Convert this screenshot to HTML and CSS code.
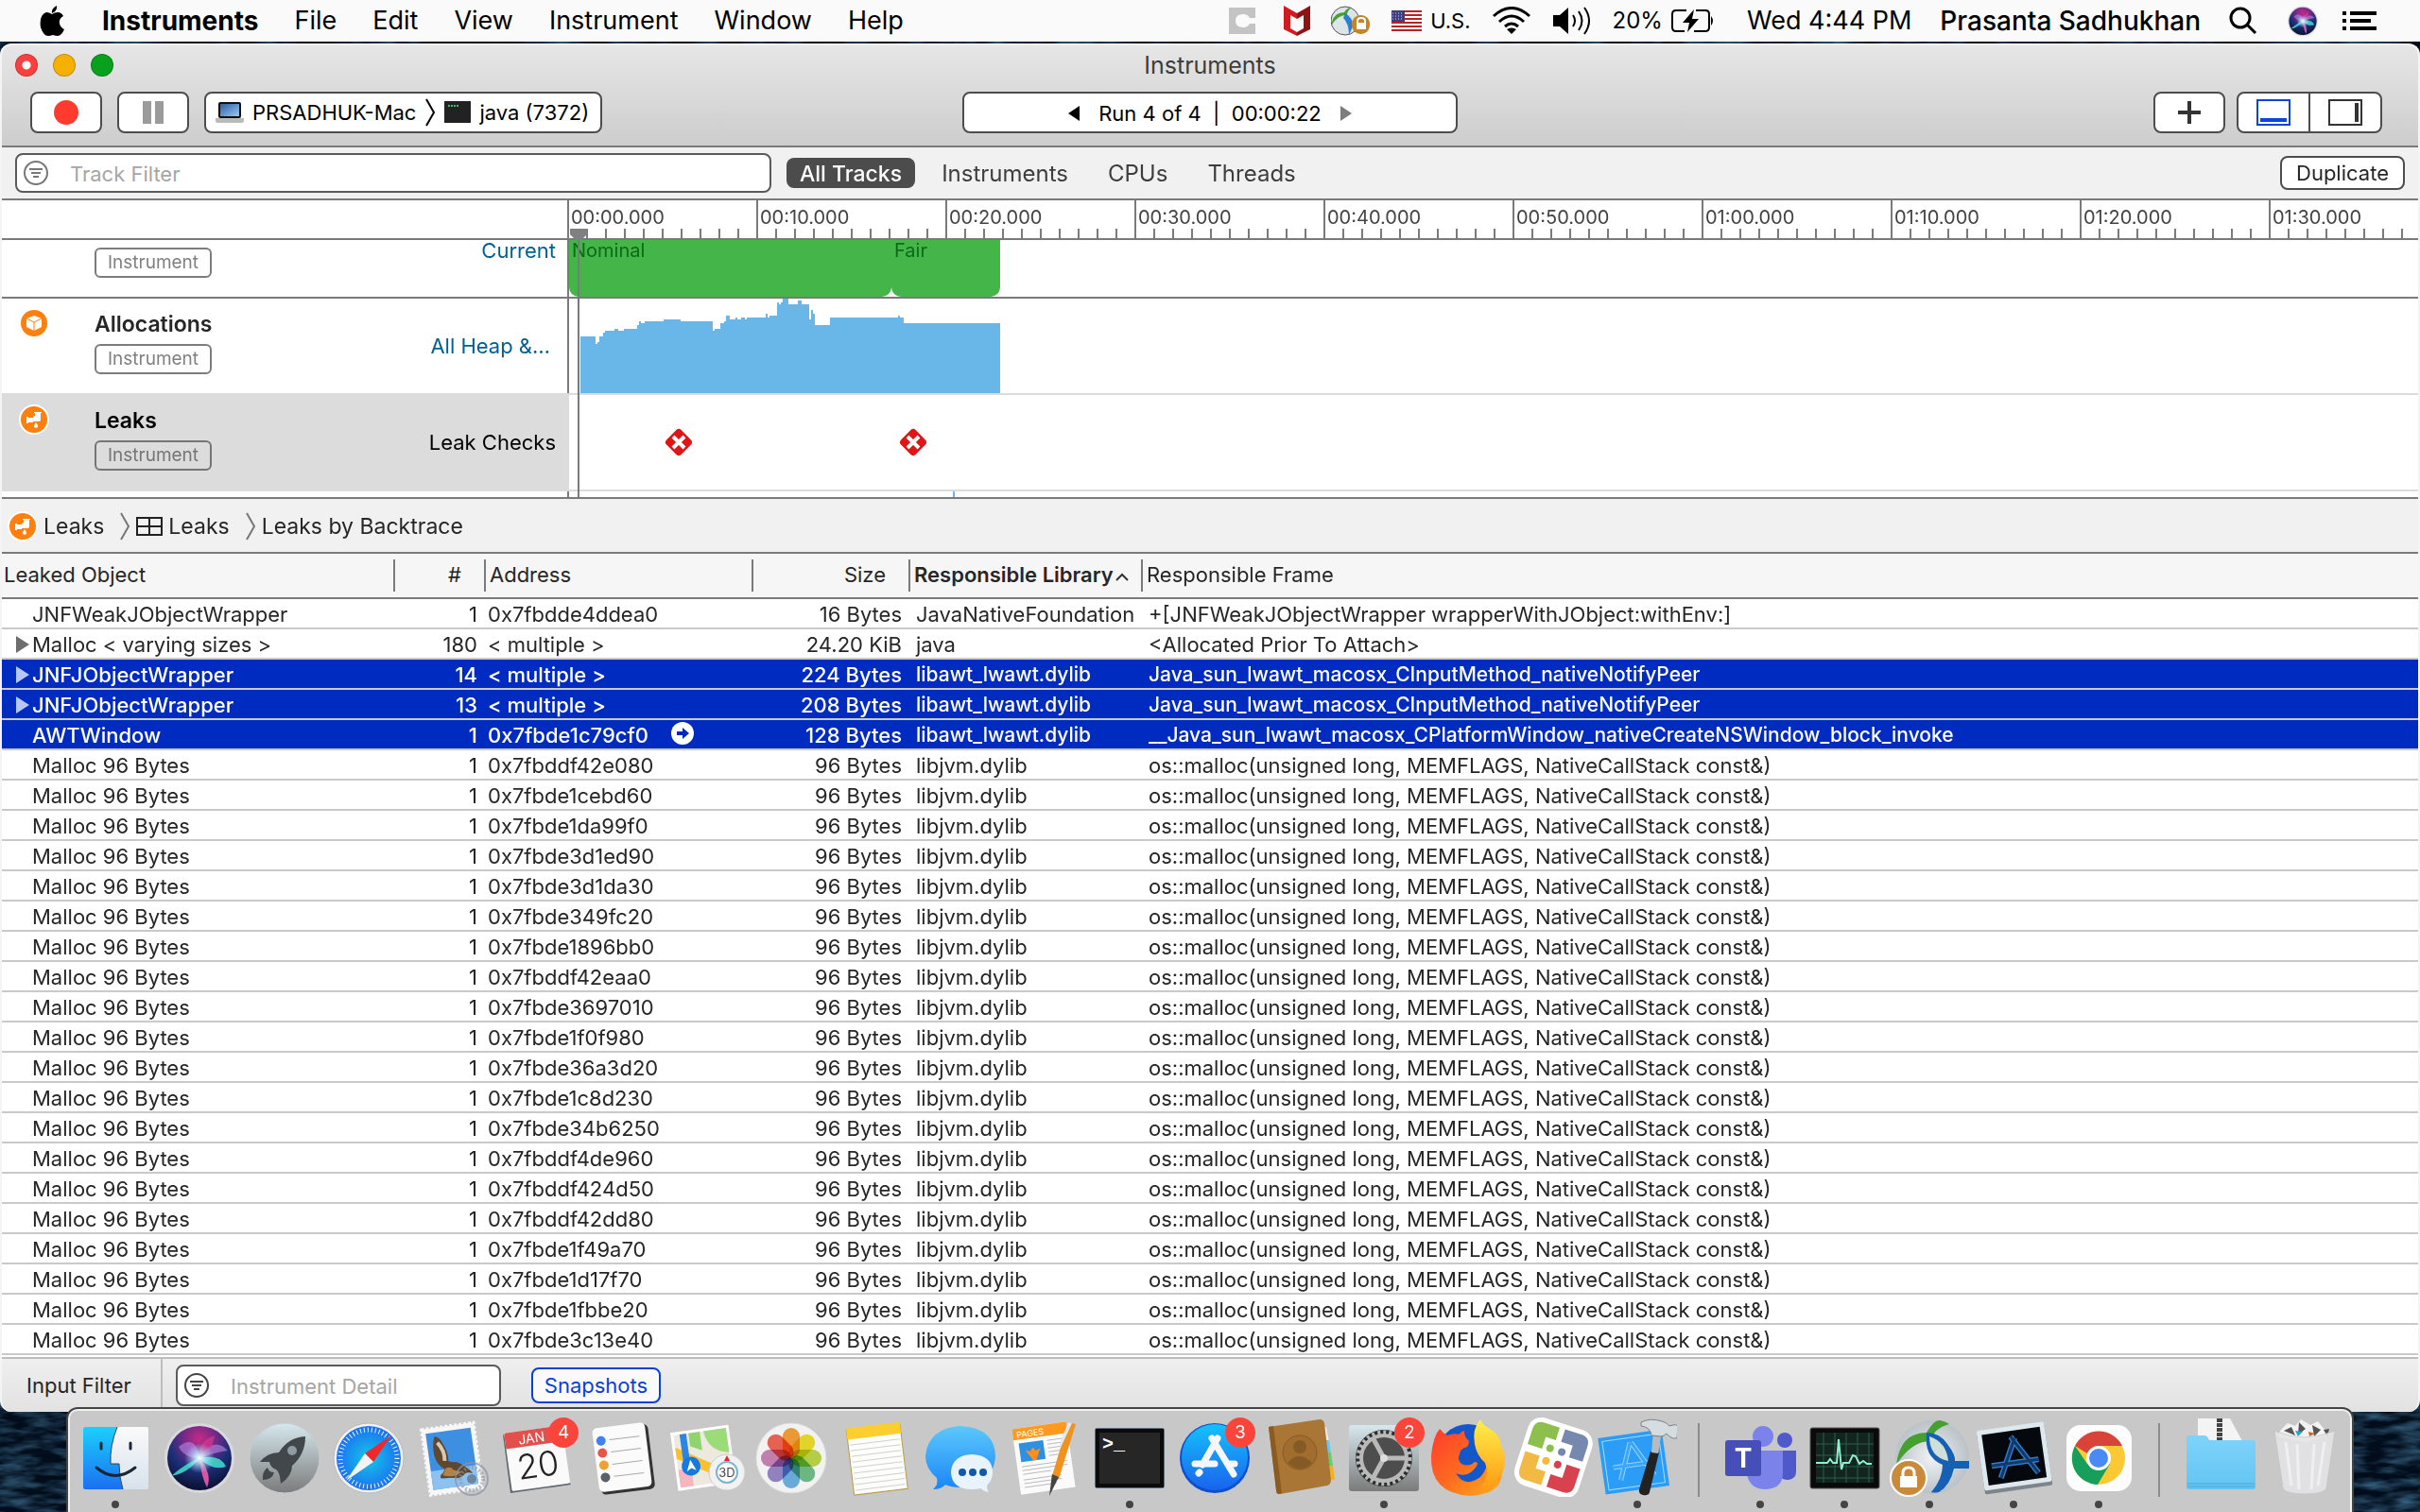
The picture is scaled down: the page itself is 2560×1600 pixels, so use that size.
FILE: index.html
```html
<!DOCTYPE html>
<html lang="en">
  <head>
    <meta charset="UTF-8" />
    <meta name="viewport" content="width=device-width, initial-scale=1.0" />
    <title>Instruments</title>
    <link rel="stylesheet" href="styles.css">
  </head>
  <body>
    <svg class="wallpaper" aria-hidden="true">
      <defs>
        <filter id="water" x="0" y="0" width="100%" height="100%">
          <feTurbulence type="fractalNoise" baseFrequency="0.03 0.12" numOctaves="3" seed="4" />
          <feColorMatrix values="0 0 0 0 0.06  0 0 0 0 0.2  0 0 0 0 0.34  1.4 0 0 0 -0.5" />
        </filter>
        <linearGradient id="g-blue" x1="0" y1="0" x2="0" y2="1"><stop offset="0" stop-color="#1ad0fd" /><stop offset="1" stop-color="#1c6ff2" /></linearGradient>
        <linearGradient id="g-store" x1="0" y1="0" x2="0" y2="1"><stop offset="0" stop-color="#14c2fc" /><stop offset="1" stop-color="#1a63ee" /></linearGradient>
        <linearGradient id="g-chat" x1="0" y1="0" x2="0" y2="1"><stop offset="0" stop-color="#5cc8fb" /><stop offset="1" stop-color="#1a86f8" /></linearGradient>
        <linearGradient id="g-silver" x1="0" y1="0" x2="0" y2="1"><stop offset="0" stop-color="#d6e8ee" /><stop offset="1" stop-color="#7b7b7b" /></linearGradient>
        <linearGradient id="g-light" x1="0" y1="0" x2="0" y2="1"><stop offset="0" stop-color="#fafafa" /><stop offset="1" stop-color="#d8e2ec" /></linearGradient>
        <linearGradient id="g-folder" x1="0" y1="0" x2="0" y2="1"><stop offset="0" stop-color="#7fd3f9" /><stop offset="1" stop-color="#62c4f3" /></linearGradient>
        <linearGradient id="g-laptop" x1="0" y1="0" x2="1" y2="1"><stop offset="0" stop-color="#2a5fa8" /><stop offset="1" stop-color="#9cc8f0" /></linearGradient>
        <linearGradient id="g-fox" x1="0" y1="0" x2="1" y2="1"><stop offset="0" stop-color="#ff3a2f" /><stop offset="0.5" stop-color="#ff6a1f" /><stop offset="1" stop-color="#ffb31a" /></linearGradient>
        <linearGradient id="g-flame" x1="0" y1="0" x2="0" y2="1"><stop offset="0" stop-color="#fff04a" /><stop offset="1" stop-color="#ff9a12" /></linearGradient>
        <radialGradient id="g-safari"><stop offset="0" stop-color="#12c8e8" /><stop offset="1" stop-color="#1d70f0" /></radialGradient>
        <radialGradient id="g-siri" cx="0.5" cy="0.2" r="0.8"><stop offset="0" stop-color="#c42a86" /><stop offset="0.35" stop-color="#6a2a86" /><stop offset="0.6" stop-color="#1c2f78" /><stop offset="1" stop-color="#0a1030" /></radialGradient>
        <radialGradient id="g-glow"><stop offset="0" stop-color="#fff" /><stop offset="0.3" stop-color="#c8f4ff" stop-opacity="0.8" /><stop offset="1" stop-color="#8fd8ff" stop-opacity="0" /></radialGradient>
        <radialGradient id="g-globe"><stop offset="0" stop-color="#f2f4f6" /><stop offset="1" stop-color="#b9c2c8" /></radialGradient>

        <symbol id="siri" viewBox="0 0 84 84">
          <circle cx="42" cy="43" r="37" fill="#d9d9dc" />
          <circle cx="42" cy="43" r="34" fill="url(#g-siri)" />
          <path d="M42 43q-12 16-30 19q16-14 30-19zM42 43q14 14 28 9q-6-14-28-9z" fill="#3fe0cc" opacity="0.85" />
          <path d="M42 43q2 20 8 31q6-14-8-31z" fill="#ee5aa8" opacity="0.9" />
          <path d="M42 43q14-24 30-8q-14 2-30 8zM42 43q-4-26-22-12q6 12 22 12z" fill="#b58be8" opacity="0.6" />
          <path d="M42 43q-2-18 16-24q-2 16-16 24z" fill="#e23a92" opacity="0.6" />
          <circle cx="42" cy="43" r="16" fill="url(#g-glow)" />
        </symbol>
        <symbol id="globe" viewBox="0 0 84 84">
          <circle cx="45" cy="42" r="39" fill="url(#g-globe)" />
          <path d="M7 50q4-34 32-34q8-14 14-13q6 1 10 4q-16 4-20 18q-20 0-36 25z" fill="#46a02f" />
          <path d="M39 16q14 0 22 12q9 12 8 18h15v8h-16q-4 18-16 25q-6 1-8 0q12-14 12-29q-20-8-17-34z" fill="#1560b4" />
          <path d="M42 20q18 6 20 26q-20-4-20-26z" fill="#cfe0d8" />
        </symbol>
        <symbol id="faucet" viewBox="0 0 32 32">
          <circle cx="16" cy="16" r="15" fill="#ff7f0f" stroke="#fff" stroke-width="2" />
          <path d="M8 13h2v1h5v-1l2-1V9h-1V8h8v1h-1v7q0 2-2 2h-6v1h-5v1H8z" fill="#fff" />
          <path d="M18 19q4 5 0 6q-4-1 0-6z" fill="#fff" />
        </symbol>
        <symbol id="filter" viewBox="0 0 28 28">
          <circle cx="14" cy="14" r="12" fill="none" stroke="currentColor" stroke-width="2" />
          <path d="M7 10h14M9 14h10M11 18h6" stroke="currentColor" stroke-width="2" />
        </symbol>
        <symbol id="chevron" viewBox="0 0 12 30">
          <path d="M2 1l8 14l-8 14" fill="none" stroke="currentColor" stroke-width="2" />
        </symbol>
        <symbol id="leak" viewBox="0 0 30 30">
          <rect x="4" y="4" width="22" height="22" rx="4" fill="#e21414" transform="rotate(45 15 15)" />
          <path d="M9 9l12 12M21 9L9 21" stroke="#fff" stroke-width="4" />
        </symbol>
      </defs>
      <rect width="100%" height="100%" filter="url(#water)" />
    </svg>

    <header class="menubar">
      <nav class="menus">
        <a href="#" aria-label="Apple">
          <svg class="apple" viewBox="0 0 26 32"><path d="M18 0q1 5-5 8q-1-5 5-8zM13 9q3-2 6-2q4 0 6 4q-5 3-4 8q1 4 5 6q-3 7-7 7q-2 0-5-1q-3 1-5 1q-5 0-8-9Q-1 10 7 7q3 0 6 2z" /></svg>
        </a>
        <a href="#" class="app-name">Instruments</a>
        <a href="#">File</a>
        <a href="#">Edit</a>
        <a href="#">View</a>
        <a href="#">Instrument</a>
        <a href="#">Window</a>
        <a href="#">Help</a>
      </nav>
      <div class="status">
        <svg class="status-c" width="28" height="28" viewBox="0 0 28 28"><path d="M0 0h28v11h-6q-2-4-7-4q-8 0-8 7t8 7q5 0 7-4h6v11H0z" fill="#c4c4c4" /></svg>
        <svg width="28" height="32" viewBox="0 0 28 32"><path d="M0 0l14 8v6l-7-4v14l7 4v4L0 25z" fill="#d01c20" /><path d="M28 0L14 8v6l7-4v14l-7 4v4l14-7z" fill="#8e1414" /></svg>
        <svg width="42" height="32" viewBox="0 0 42 32">
          <circle cx="15" cy="16" r="15" fill="#dde4e8" stroke="#555" />
          <path d="M1 17q3-10 13-10q3-5 8-5q-5 3-5 8q-9-1-16 10z" fill="#46a02f" />
          <path d="M15 8q8 4 8 14l-4 9q0-12-6-18z" fill="#2b7fd0" />
          <rect x="22" y="10" width="19" height="20" rx="9" fill="#c98325" />
          <path d="M28 19v-3q0-3 4-3t4 3v3" fill="none" stroke="#fff" stroke-width="2" /><rect x="27" y="18" width="10" height="7" fill="#fff" />
        </svg>
        <div class="status-pair">
          <svg width="32" height="22" viewBox="0 0 32 22"><path fill="#fff" d="M0 0h32v22H0z" /><path d="M0 1h32M0 5h32M0 9h32M0 13h32M0 17h32M0 21h32" stroke="#b52228" stroke-width="2" /><path fill="#3b3f7c" d="M0 0h14v12H0z" /><path d="M1 3h12M1 6h12M1 9h12" stroke="#dde" stroke-dasharray="1 2" /></svg>
          <span class="input-source">U.S.</span>
        </div>
        <svg width="42" height="30" viewBox="0 0 42 30"><g fill="none" stroke="#000" stroke-width="3"><path d="M2 10q19-17 38 0" /><path d="M8 16q13-12 26 0" /><path d="M14 21q7-6 14 0" /></g><path d="M21 29l-5-5q5-3 10 0z" /></svg>
        <svg width="42" height="30" viewBox="0 0 42 30"><path d="M1 9h7l9-8v28l-9-8H1z" /><g fill="none" stroke="#000" stroke-width="2"><path d="M22 9q4 6 0 12" /><path d="M28 5q7 10 0 20" /><path d="M34 1q10 14 0 28" /></g></svg>
        <div class="status-pair">
          <span class="charge">20%</span>
          <svg width="46" height="26" viewBox="0 0 46 26"><path d="M16 2H5Q1 2 1 6v14q0 4 4 4h9M26 2h10q4 0 4 4v14q0 4-4 4H24" fill="none" stroke="#000" stroke-width="2" /><path d="M24 1L12 15h7l-2 10l12-14h-7z" /><path d="M42 8q4 5 0 10z" /></svg>
        </div>
      </div>
      <div class="status account">
        <span>Wed 4:44 PM</span>
        <span class="user">Prasanta Sadhukhan</span>
        <svg width="30" height="30" viewBox="0 0 30 30"><circle cx="12" cy="12" r="10" fill="none" stroke="#000" stroke-width="3" /><path d="M19 19l9 9" stroke="#000" stroke-width="3" /></svg>
        <svg class="menubar-siri" width="36" height="36"><use href="#siri" /></svg>
        <svg width="36" height="22" viewBox="0 0 36 22"><path d="M0 3h4M0 11h4M0 19h4M8 3h28M8 11h22M8 19h28" stroke="#000" stroke-width="4" /></svg>
      </div>
    </header>

    <main class="window">
      <header class="chrome">
        <div class="titlebar">
          <div class="lights">
            <button class="light close" aria-label="Close"></button>
            <button class="light minimize" aria-label="Minimize"></button>
            <button class="light maximize" aria-label="Zoom"></button>
          </div>
          <h1>Instruments</h1>
        </div>
        <div class="toolbar">
          <div class="toolbar-left">
            <button class="tool" aria-label="Record"><svg width="26" height="26" viewBox="0 0 26 26"><circle cx="13" cy="13" r="13" fill="#ff3b30" /></svg></button>
            <button class="tool" aria-label="Pause"><svg width="22" height="24" viewBox="0 0 22 24"><path d="M0 0h9v24H0zM13 0h9v24h-9z" fill="#9b9b9b" /></svg></button>
            <button class="tool target">
              <svg width="30" height="22" viewBox="0 0 30 22"><rect x="3" width="24" height="17" rx="2" fill="#111" /><path fill="url(#g-laptop)" d="M5 2h20v13H5z" /><path d="M0 17h30v3q0 2-2 2H2q-2 0-2-2z" fill="#bbb" /></svg>
              <span>PRSADHUK-Mac</span>
              <svg width="12" height="30"><use href="#chevron" /></svg>
              <svg width="28" height="26" viewBox="0 0 28 26"><path fill="#222" d="M0 1h28v23H0z" /><path d="M4 6h11" stroke="#3fbf5a" stroke-width="2" stroke-dasharray="2 1" /></svg>
              <span>java (7372)</span>
            </button>
          </div>
          <div class="run">
            <button aria-label="Previous run"><svg width="12" height="16" viewBox="0 0 12 16"><path d="M12 0v16L0 8z" /></svg></button>
            <span>Run 4 of 4 &nbsp;|&nbsp; 00:00:22</span>
            <button aria-label="Next run"><svg width="12" height="16" viewBox="0 0 12 16"><path d="M0 0v16l12-8z" fill="#7d7d7d" /></svg></button>
          </div>
          <div class="toolbar-right">
            <button class="tool" aria-label="Add instrument"><svg width="24" height="24" viewBox="0 0 24 24"><path d="M12 0v24M0 12h24" stroke="#333" stroke-width="4" /></svg></button>
            <div class="segmented">
              <button aria-label="Toggle detail"><svg width="36" height="28" viewBox="0 0 36 28"><path d="M1 1h34v26H1z" fill="none" stroke="#0a45e0" stroke-width="2" /><path fill="#0a45e0" d="M4 20h28v4H4z" /></svg></button>
              <button aria-label="Toggle inspector"><svg width="36" height="28" viewBox="0 0 36 28"><path d="M1 1h34v26H1z" fill="none" stroke="#333" stroke-width="2" /><path fill="#333" d="M28 4h4v20h-4z" /></svg></button>
            </div>
          </div>
        </div>
      </header>

      <div class="filterbar">
        <label class="search track-search">
          <svg width="28" height="28"><use href="#filter" /></svg>
          <input type="text" placeholder="Track Filter" aria-label="Track Filter" />
        </label>
        <div class="scopes">
          <button class="scope active">All Tracks</button>
          <button class="scope">Instruments</button>
          <button class="scope">CPUs</button>
          <button class="scope">Threads</button>
        </div>
        <button class="duplicate">Duplicate</button>
      </div>

      <section class="timeline">
        <div class="ruler">
          <div class="ruler-scale">
            <span>00:00.000</span><span>00:10.000</span><span>00:20.000</span><span>00:30.000</span><span>00:40.000</span><span>00:50.000</span><span>01:00.000</span><span>01:10.000</span><span>01:20.000</span><span>01:30.000</span>
          </div>
        </div>
        <div class="track thermal">
          <div class="track-info">
            <div class="track-name"><span class="pill">Instrument</span></div>
            <span class="track-label">Current</span>
          </div>
          <div class="lane">
            <div class="state nominal">Nominal</div>
            <div class="state fair">Fair</div>
          </div>
        </div>
        <div class="track">
          <div class="track-info">
            <svg class="track-icon" viewBox="0 0 32 32"><circle cx="16" cy="16" r="14" fill="#ff7f0f" /><path d="M16 8l8 3v9l-8 4l-8-4v-9z" fill="#fff" /><path d="M8 11l8 4l8-4M16 15v9" fill="none" stroke="#ff7f0f" /></svg>
            <div class="track-name"><b>Allocations</b><span class="pill">Instrument</span></div>
            <span class="track-label truncated">All Heap &amp;…</span>
          </div>
          <div class="lane">
            <svg class="heap" viewBox="0 0 458 100">
              <path fill="#69b6e9" d="M14 100V40H30V48H32V46H34V40H38V36H40V34H50V32H54V34H60V32H74V28H76V24H78V26H82V24H102V22H120V24H154V34H156V32H162V26H166V24H168V18H172V22H178V20H180V22H184V20H188V22H190V20H210V16H212V20H214V18H222V4H224V6H226V4H228V0H234V6H244V2H248V6H256V22H258V12H260V16H262V28H278V20H350V18H352V20H356V26H458V100z" />
            </svg>
          </div>
        </div>
        <div class="track selected">
          <div class="track-info">
            <svg class="track-icon"><use href="#faucet" /></svg>
            <div class="track-name"><b>Leaks</b><span class="pill">Instrument</span></div>
            <span class="track-label">Leak Checks</span>
          </div>
          <div class="lane">
            <svg class="leak first" width="30" height="30"><use href="#leak" /></svg>
            <svg class="leak second" width="30" height="30"><use href="#leak" /></svg>
          </div>
        </div>
        <div class="track-peek"></div>
        <div class="playhead"><svg width="18" height="12" viewBox="0 0 18 12"><path d="M0 0h18v6l-6 6H6L0 6z" fill="#808080" /></svg></div>
      </section>

      <nav class="breadcrumb">
        <svg width="32" height="32"><use href="#faucet" /></svg>
        <a href="#">Leaks</a>
        <svg class="crumb-sep" width="12" height="30"><use href="#chevron" /></svg>
        <svg width="28" height="20" viewBox="0 0 28 20"><path d="M1 1h26v18H1zM14 1v18M1 10h26" fill="none" stroke="#222" stroke-width="2" /></svg>
        <a href="#">Leaks</a>
        <svg class="crumb-sep" width="12" height="30"><use href="#chevron" /></svg>
        <a href="#">Leaks by Backtrace</a>
      </nav>

      <div class="detail">
        <table>
          <colgroup><col class="c-object"><col class="c-count"><col class="c-address"><col class="c-size"><col class="c-library"><col></colgroup>
          <thead>
            <tr>
              <th>Leaked Object</th>
              <th>#</th>
              <th>Address</th>
              <th>Size</th>
              <th class="sorted">Responsible Library<svg width="14" height="9" viewBox="0 0 14 9"><path d="M1 8l6-6l6 6" fill="none" stroke="#333" stroke-width="2" /></svg></th>
              <th>Responsible Frame</th>
            </tr>
          </thead>
          <tbody>
            <tr><td>JNFWeakJObjectWrapper</td><td>1</td><td>0x7fbdde4ddea0</td><td>16 Bytes</td><td>JavaNativeFoundation</td><td>+[JNFWeakJObjectWrapper wrapperWithJObject:withEnv:]</td></tr>
            <tr><td><button class="disclosure" aria-label="Expand"></button>Malloc &lt; varying sizes &gt;</td><td>180</td><td>&lt; multiple &gt;</td><td>24.20 KiB</td><td>java</td><td>&lt;Allocated Prior To Attach&gt;</td></tr>
            <tr class="selected"><td><button class="disclosure" aria-label="Expand"></button>JNFJObjectWrapper</td><td>14</td><td>&lt; multiple &gt;</td><td>224 Bytes</td><td>libawt_lwawt.dylib</td><td>Java_sun_lwawt_macosx_CInputMethod_nativeNotifyPeer</td></tr>
            <tr class="selected"><td><button class="disclosure" aria-label="Expand"></button>JNFJObjectWrapper</td><td>13</td><td>&lt; multiple &gt;</td><td>208 Bytes</td><td>libawt_lwawt.dylib</td><td>Java_sun_lwawt_macosx_CInputMethod_nativeNotifyPeer</td></tr>
            <tr class="selected"><td>AWTWindow</td><td>1</td><td>0x7fbde1c79cf0<button class="focus" aria-label="Show history"><svg width="24" height="24" viewBox="0 0 24 24"><circle cx="12" cy="12" r="12" fill="#fff" /><path d="M6 10h6V6l7 6l-7 6v-4H6z" fill="#0026c0" /></svg></button></td><td>128 Bytes</td><td>libawt_lwawt.dylib</td><td>__Java_sun_lwawt_macosx_CPlatformWindow_nativeCreateNSWindow_block_invoke</td></tr>
            <tr><td>Malloc 96 Bytes</td><td>1</td><td>0x7fbddf42e080</td><td>96 Bytes</td><td>libjvm.dylib</td><td>os::malloc(unsigned long, MEMFLAGS, NativeCallStack const&amp;)</td></tr>
            <tr><td>Malloc 96 Bytes</td><td>1</td><td>0x7fbde1cebd60</td><td>96 Bytes</td><td>libjvm.dylib</td><td>os::malloc(unsigned long, MEMFLAGS, NativeCallStack const&amp;)</td></tr>
            <tr><td>Malloc 96 Bytes</td><td>1</td><td>0x7fbde1da99f0</td><td>96 Bytes</td><td>libjvm.dylib</td><td>os::malloc(unsigned long, MEMFLAGS, NativeCallStack const&amp;)</td></tr>
            <tr><td>Malloc 96 Bytes</td><td>1</td><td>0x7fbde3d1ed90</td><td>96 Bytes</td><td>libjvm.dylib</td><td>os::malloc(unsigned long, MEMFLAGS, NativeCallStack const&amp;)</td></tr>
            <tr><td>Malloc 96 Bytes</td><td>1</td><td>0x7fbde3d1da30</td><td>96 Bytes</td><td>libjvm.dylib</td><td>os::malloc(unsigned long, MEMFLAGS, NativeCallStack const&amp;)</td></tr>
            <tr><td>Malloc 96 Bytes</td><td>1</td><td>0x7fbde349fc20</td><td>96 Bytes</td><td>libjvm.dylib</td><td>os::malloc(unsigned long, MEMFLAGS, NativeCallStack const&amp;)</td></tr>
            <tr><td>Malloc 96 Bytes</td><td>1</td><td>0x7fbde1896bb0</td><td>96 Bytes</td><td>libjvm.dylib</td><td>os::malloc(unsigned long, MEMFLAGS, NativeCallStack const&amp;)</td></tr>
            <tr><td>Malloc 96 Bytes</td><td>1</td><td>0x7fbddf42eaa0</td><td>96 Bytes</td><td>libjvm.dylib</td><td>os::malloc(unsigned long, MEMFLAGS, NativeCallStack const&amp;)</td></tr>
            <tr><td>Malloc 96 Bytes</td><td>1</td><td>0x7fbde3697010</td><td>96 Bytes</td><td>libjvm.dylib</td><td>os::malloc(unsigned long, MEMFLAGS, NativeCallStack const&amp;)</td></tr>
            <tr><td>Malloc 96 Bytes</td><td>1</td><td>0x7fbde1f0f980</td><td>96 Bytes</td><td>libjvm.dylib</td><td>os::malloc(unsigned long, MEMFLAGS, NativeCallStack const&amp;)</td></tr>
            <tr><td>Malloc 96 Bytes</td><td>1</td><td>0x7fbde36a3d20</td><td>96 Bytes</td><td>libjvm.dylib</td><td>os::malloc(unsigned long, MEMFLAGS, NativeCallStack const&amp;)</td></tr>
            <tr><td>Malloc 96 Bytes</td><td>1</td><td>0x7fbde1c8d230</td><td>96 Bytes</td><td>libjvm.dylib</td><td>os::malloc(unsigned long, MEMFLAGS, NativeCallStack const&amp;)</td></tr>
            <tr><td>Malloc 96 Bytes</td><td>1</td><td>0x7fbde34b6250</td><td>96 Bytes</td><td>libjvm.dylib</td><td>os::malloc(unsigned long, MEMFLAGS, NativeCallStack const&amp;)</td></tr>
            <tr><td>Malloc 96 Bytes</td><td>1</td><td>0x7fbddf4de960</td><td>96 Bytes</td><td>libjvm.dylib</td><td>os::malloc(unsigned long, MEMFLAGS, NativeCallStack const&amp;)</td></tr>
            <tr><td>Malloc 96 Bytes</td><td>1</td><td>0x7fbddf424d50</td><td>96 Bytes</td><td>libjvm.dylib</td><td>os::malloc(unsigned long, MEMFLAGS, NativeCallStack const&amp;)</td></tr>
            <tr><td>Malloc 96 Bytes</td><td>1</td><td>0x7fbddf42dd80</td><td>96 Bytes</td><td>libjvm.dylib</td><td>os::malloc(unsigned long, MEMFLAGS, NativeCallStack const&amp;)</td></tr>
            <tr><td>Malloc 96 Bytes</td><td>1</td><td>0x7fbde1f49a70</td><td>96 Bytes</td><td>libjvm.dylib</td><td>os::malloc(unsigned long, MEMFLAGS, NativeCallStack const&amp;)</td></tr>
            <tr><td>Malloc 96 Bytes</td><td>1</td><td>0x7fbde1d17f70</td><td>96 Bytes</td><td>libjvm.dylib</td><td>os::malloc(unsigned long, MEMFLAGS, NativeCallStack const&amp;)</td></tr>
            <tr><td>Malloc 96 Bytes</td><td>1</td><td>0x7fbde1fbbe20</td><td>96 Bytes</td><td>libjvm.dylib</td><td>os::malloc(unsigned long, MEMFLAGS, NativeCallStack const&amp;)</td></tr>
            <tr><td>Malloc 96 Bytes</td><td>1</td><td>0x7fbde3c13e40</td><td>96 Bytes</td><td>libjvm.dylib</td><td>os::malloc(unsigned long, MEMFLAGS, NativeCallStack const&amp;)</td></tr>
          </tbody>
        </table>
      </div>

      <footer class="bottombar">
        <span class="input-filter">Input Filter</span>
        <label class="search detail-search">
          <svg width="28" height="28"><use href="#filter" /></svg>
          <input type="text" placeholder="Instrument Detail" aria-label="Instrument Detail" />
        </label>
        <button class="snapshots">Snapshots</button>
      </footer>
    </main>

    <nav class="dock">
      <a href="#" class="app running" aria-label="Finder">
        <svg viewBox="0 0 84 84">
          <rect x="8" y="10" width="69" height="66" rx="2" fill="url(#g-light)" />
          <path d="M44 10q-8 20-7 39h9q0 14 4 27H10q-2 0-2-2V12q0-2 2-2z" fill="url(#g-blue)" />
          <path d="M44 10q-8 20-7 39h9q0 14 4 27" fill="none" stroke="#345" />
          <path d="M27 27v6M58 27v6" stroke="#1b2733" stroke-width="3" stroke-linecap="round" />
          <path d="M22 53q20 17 41 0" fill="none" stroke="#1b2733" stroke-width="3" stroke-linecap="round" />
        </svg>
      </a>
      <a href="#" class="app" aria-label="Siri"><svg><use href="#siri" /></svg></a>
      <a href="#" class="app" aria-label="Launchpad">
        <svg viewBox="0 0 84 84">
          <circle cx="42" cy="43" r="37" fill="url(#g-silver)" stroke="#c5cdd0" />
          <path d="M64 20q-18 1-28 17q-12 0-20 10l10 0q1 6 7 8q4 2 5 15q12-8 12-19q14-12 14-31z" fill="#41474b" />
          <circle cx="50" cy="35" r="5" fill="#8f9ba0" />
          <path d="M24 53q-6 4-5 13q10 0 12-8q-6 0-7-5z" fill="#41474b" />
        </svg>
      </a>
      <a href="#" class="app" aria-label="Safari">
        <svg viewBox="0 0 84 84">
          <circle cx="42" cy="43" r="37" fill="#f1f1f1" stroke="#bbb" />
          <circle cx="42" cy="43" r="34" fill="url(#g-safari)" />
          <circle cx="42" cy="43" r="30" fill="none" stroke="#e8f6ff" stroke-width="5" stroke-dasharray="1 3" />
          <path d="M66 19L38 38l9 9z" fill="#f0282c" />
          <path d="M18 67l20-29l9 9z" fill="#f3f3f3" />
        </svg>
      </a>
      <a href="#" class="app" aria-label="Mail">
        <svg viewBox="0 0 84 84">
          <g transform="rotate(-8 38 43)">
            <rect x="12" y="9" width="56" height="70" fill="#f7f7f7" stroke="#f7f7f7" stroke-width="3" stroke-dasharray="3 2" />
            <rect x="16" y="14" width="48" height="60" fill="#3d8fe2" />
            <path d="M16 54h48v20H16z" fill="#8dc1f0" />
            <path d="M25 18q6 2 8 10q4 8 3 18q4 2 8 2q8 4 16 14q-6-2-8-1q-6 6-14 3l-12-1q-2-3 2-5l3-4q-8-6-9-16q-1-12 3-20z" fill="#5f4730" />
            <path d="M27 25q7 10 5 20" stroke="#d9c9ae" stroke-width="4" fill="none" />
            <path d="M28 60l4-7q6-2 8 3l8 3q-8 6-20 1z" fill="#b0834a" />
          </g>
          <circle cx="61" cy="65" r="17" fill="none" stroke="#8a93a3" stroke-width="2" opacity="0.7" />
          <circle cx="61" cy="65" r="12" fill="none" stroke="#8a93a3" stroke-width="4" stroke-dasharray="2 2" opacity="0.6" />
          <circle cx="61" cy="65" r="5" fill="#64758c" opacity="0.8" />
        </svg>
      </a>
      <a href="#" class="app" aria-label="Calendar">
        <svg viewBox="0 0 84 84">
          <path d="M5 18l8 62l64-9l-6-8z" fill="#5f686d" />
          <g transform="rotate(-8 42 42)">
            <rect x="10" y="12" width="62" height="62" rx="2" fill="#fafafa" />
            <path d="M10 14q0-2 2-2h58q2 0 2 2v15H10z" fill="#e2504b" />
            <text x="38" y="26" class="cal-month">JAN</text>
            <text x="41" y="63" class="cal-day">20</text>
          </g>
        </svg>
        <span class="badge">4</span>
      </a>
      <a href="#" class="app" aria-label="Reminders">
        <svg viewBox="0 0 84 84">
          <g transform="rotate(-7 42 42)">
            <rect x="15" y="10" width="57" height="69" rx="5" fill="#333" />
            <rect x="13" y="8" width="56" height="68" rx="5" fill="#fbfbfb" />
            <circle cx="21" cy="22" r="5" fill="#3d82f6" /><circle cx="21" cy="35" r="5" fill="#ea5545" /><circle cx="21" cy="48" r="5" fill="#f1a033" /><circle cx="21" cy="61" r="5" fill="#5b6168" />
            <path d="M30 22h32M30 35h32M30 48h32M30 61h32" stroke="#aaa" />
          </g>
        </svg>
      </a>
      <a href="#" class="app" aria-label="Maps">
        <svg viewBox="0 0 84 84">
          <g transform="rotate(-8 36 43)">
            <rect x="7" y="12" width="62" height="62" fill="#fff" />
            <rect x="10" y="15" width="56" height="56" fill="#eee9df" />
            <path d="M42 15h24v26q-22-4-24-26z" fill="#9bdc78" />
            <path d="M10 52h14v19H10z" fill="#f4b6bf" /><path d="M26 15h12v20l-12-6z" fill="#8fd46d" />
            <path d="M10 28l56 34v12l-56-34z" fill="#fbc02d" />
            <path d="M20 15v30" stroke="#2a86e0" stroke-width="7" />
            <circle cx="24" cy="50" r="10" fill="#1579e0" /><path d="M24 43l5 12l-5-3l-5 3z" fill="#fff" />
          </g>
          <circle cx="63" cy="58" r="19" fill="#f2f2f2" stroke="#ccc" />
          <circle cx="63" cy="58" r="11" fill="#fff" stroke="#7db4d0" stroke-width="2" />
          <path d="M63 40l3 6h-6z" fill="#e22" />
          <text x="63" y="63" class="map-text">3D</text>
        </svg>
      </a>
      <a href="#" class="app" aria-label="Photos">
        <svg viewBox="0 0 84 84">
          <circle cx="42" cy="43" r="37" fill="#f2f2f2" stroke="#ddd" />
          <g class="petals">
            <rect x="33" y="11" width="18" height="32" rx="9" fill="#f8a13a" />
            <rect x="33" y="11" width="18" height="32" rx="9" fill="#efdf2c" transform="rotate(45 42 43)" />
            <rect x="33" y="11" width="18" height="32" rx="9" fill="#bdd94a" transform="rotate(90 42 43)" />
            <rect x="33" y="11" width="18" height="32" rx="9" fill="#72c08a" transform="rotate(135 42 43)" />
            <rect x="33" y="11" width="18" height="32" rx="9" fill="#6fb3e4" transform="rotate(180 42 43)" />
            <rect x="33" y="11" width="18" height="32" rx="9" fill="#9a88ca" transform="rotate(225 42 43)" />
            <rect x="33" y="11" width="18" height="32" rx="9" fill="#cc86b6" transform="rotate(270 42 43)" />
            <rect x="33" y="11" width="18" height="32" rx="9" fill="#f26655" transform="rotate(315 42 43)" />
          </g>
        </svg>
      </a>
      <a href="#" class="app" aria-label="Notes">
        <svg viewBox="0 0 84 84">
          <g transform="rotate(-7 42 42)">
            <rect x="14" y="9" width="57" height="70" fill="#fdfdfa" stroke="#b99b45" />
            <path d="M14 8h57v12H14z" fill="#fccf2e" />
            <path d="M16 26h53M16 32h53M16 38h53M16 44h53M16 50h53M16 56h53M16 62h53M16 68h53M16 74h53" stroke="#d0d0d0" />
          </g>
        </svg>
      </a>
      <a href="#" class="app" aria-label="Messages">
        <svg viewBox="0 0 84 84">
          <path d="M42 9q37 2 37 33q-3 30-37 32q-10 0-16-3q-4 5-13 5q6-5 4-12Q5 54 5 41Q8 11 42 9z" fill="url(#g-chat)" />
          <path d="M54 39q22 1 22 19q0 8-6 14q0 5 2 7q-6-1-8-4q-31 5-32-17q1-18 22-19z" fill="#e9f3fb" />
          <circle cx="44" cy="58" r="4" fill="#1456a8" /><circle cx="55" cy="58" r="4" fill="#1456a8" /><circle cx="66" cy="58" r="4" fill="#1456a8" />
        </svg>
      </a>
      <a href="#" class="app" aria-label="Pages">
        <svg viewBox="0 0 84 84">
          <g transform="rotate(-8 40 43)">
            <rect x="11" y="8" width="58" height="70" fill="#fbfbfb" />
            <path d="M11 8h58v12H11z" fill="#ff9a1e" />
            <text x="15" y="18" class="pages-text">PAGES</text>
            <rect x="16" y="24" width="26" height="20" fill="#2f8fe0" /><path d="M29 44l-7-12l5 2l3-4l3 4l5-2l-6 12z" fill="#ff8f1a" />
            <path d="M46 25h18M46 29h18M46 33h18M46 37h18M46 41h18M16 49h48M16 53h48M16 57h30M16 63h40M16 67h40M16 71h34" stroke="#bbb" />
          </g>
          <path d="M66 5l8 2l-18 58l-8 0z" fill="#f0921e" /><path d="M66 5l4 1l-12 26l-1-4z" fill="#dfe8ee" /><path d="M49 60l7 3l-10 20z" fill="#444" />
        </svg>
      </a>
      <a href="#" class="app running" aria-label="Terminal">
        <svg viewBox="0 0 84 84">
          <rect x="5" y="11" width="74" height="64" rx="2" fill="#0b0b0b" stroke="#bcd" /><rect x="10" y="16" width="64" height="54" fill="#262626" />
          <text x="13" y="34" class="prompt">&gt;_</text>
        </svg>
      </a>
      <a href="#" class="app" aria-label="App Store">
        <svg viewBox="0 0 84 84">
          <circle cx="42" cy="43" r="37" fill="#0c4fd0" /><circle cx="42" cy="42" r="35" fill="url(#g-store)" />
          <g stroke="#f4f6fa" stroke-width="7" stroke-linecap="round"><path d="M45 22L29 50M39 22l23 38M21 49h21M56 49h7M25 59l1-1" /></g>
        </svg>
        <span class="badge">3</span>
      </a>
      <a href="#" class="app" aria-label="Contacts">
        <svg viewBox="0 0 84 84">
          <path d="M62 10h9l3 17h-10z" fill="#eee" /><path d="M64 24h10l2 14H65z" fill="#68c7ea" /><path d="M65 37h11l2 15H66z" fill="#63cf6c" /><path d="M66 51h12l2 15H66z" fill="#f4b120" />
          <path d="M10 10l54-8q4 0 5 4l7 60q0 5-4 6l-50 9q-4 0-4-4z" fill="#a97635" /><path d="M10 10l5-1l9 71l-3 1q-3 0-3-4z" fill="#8a5c22" />
          <circle cx="43" cy="37" r="18" fill="#a06d2e" stroke="#855a24" /><circle cx="43" cy="31" r="7" fill="#855a24" /><path d="M30 48q12-14 26 0q-12 12-26 0z" fill="#855a24" />
        </svg>
      </a>
      <a href="#" class="app running" aria-label="System Preferences">
        <svg viewBox="0 0 84 84">
          <rect x="5" y="8" width="74" height="70" rx="3" fill="url(#g-silver)" />
          <circle cx="42" cy="43" r="30" fill="#2d2d2d" /><circle cx="42" cy="43" r="24" fill="#4d4d4d" stroke="#b9b9b9" stroke-width="4" /><circle cx="42" cy="43" r="27" fill="none" stroke="#b9b9b9" stroke-width="5" stroke-dasharray="3 3" />
          <path d="M42 43h23M42 43L31 23M42 43L31 63" stroke="#b9b9b9" stroke-width="5" /><circle cx="42" cy="43" r="4" fill="#ddd" />
        </svg>
        <span class="badge">2</span>
      </a>
      <a href="#" class="app" aria-label="Firefox">
        <svg viewBox="0 0 84 84">
          <circle cx="42" cy="40" r="33" fill="#1457c8" />
          <path d="M12 12q4 5 8 7q8-3 12-1q4-4 6-4q0 6 3 9q4 2 0 8q-8 2-8 8q-3 5 2 10q8 4 14-2q6 0 0 7q-8 10-20 5q10 16 26 4q14-16 4-40q14 8 18 28q6 30-33 32Q1 80 3 40q2-20 9-28z" fill="url(#g-fox)" />
          <path d="M55 2q-9 10-6 26q2 12 11 20q6 16-8 28q30-4 29-34q-2-10-4-12q-1-12-12-18q-8-4-10-10z" fill="url(#g-flame)" />
        </svg>
      </a>
      <a href="#" class="app" aria-label="Slack">
        <svg viewBox="0 0 84 84">
          <g transform="rotate(18 42 42)">
            <rect x="7" y="5" width="71" height="75" rx="15" fill="#fff" />
            <path d="M12 37V20q0-10 10-10h17v14H28v13z" fill="#8cbf4c" /><path d="M45 10h18q10 0 10 10v17H58V24H45z" fill="#7688ae" />
            <path d="M12 45h16v14h11v15H22q-10 0-10-10z" fill="#f2b944" /><path d="M73 45v19q0 10-10 10H45V60h13V45z" fill="#d8424e" />
            <circle cx="36" cy="34" r="4" fill="#8cbf4c" /><circle cx="49" cy="34" r="4" fill="#7688ae" /><circle cx="36" cy="48" r="4" fill="#f2b944" /><circle cx="49" cy="48" r="4" fill="#d8424e" />
          </g>
        </svg>
      </a>
      <a href="#" class="app running" aria-label="Xcode">
        <svg viewBox="0 0 84 84">
          <g transform="rotate(-8 38 46)">
            <rect x="4" y="17" width="68" height="60" fill="#2b9df6" /><rect x="8" y="21" width="60" height="52" fill="none" stroke="#a5dcff" />
            <path d="M37 26L22 64M38 26l20 38M16 50h44" stroke="#c5e9ff" stroke-width="5" fill="none" opacity="0.7" /><path d="M37 26L22 64M38 26l20 38M16 50h44" stroke="#3aa6f8" stroke-width="3" fill="none" />
          </g>
          <path d="M56 36l9 1l-10 42q-1 4-7 3q-5-1-4-6z" fill="#222" /><path d="M59 14l9 1l-4 23l-7-1z" fill="#b5bcc0" />
          <path d="M46 5q10-5 22-1q5 1 8 5l4-1q3-1 5 1l-1 13q-5 1-8-2l-3-3q-3 3-6 3l-10-1q-1-9-11-10z" fill="#d6dde0" stroke="#7b8286" />
        </svg>
      </a>
      <span class="dock-sep"></span>
      <a href="#" class="app running" aria-label="Teams">
        <svg viewBox="0 0 84 84">
          <circle cx="45" cy="20" r="11" fill="#7b83eb" /><circle cx="68" cy="24" r="8" fill="#5059c9" />
          <path d="M60 35h20v22q0 8-8 9q-8 0-12-6z" fill="#5059c9" /><path d="M28 35h38v24q0 16-18 17q-18 0-20-17z" fill="#7b83eb" />
          <rect x="5" y="24" width="38" height="38" rx="3" fill="#464eb8" /><text x="24" y="53" class="teams-text">T</text>
        </svg>
      </a>
      <a href="#" class="app running" aria-label="Activity Monitor">
        <svg viewBox="0 0 84 84">
          <rect x="6" y="11" width="73" height="64" rx="2" fill="#0a0a0a" stroke="#555" /><rect x="12" y="16" width="61" height="53" fill="#10261f" />
          <path d="M12 28h61M12 40h61M12 52h61M12 64h61M20 16v53M32 16v53M44 16v53M56 16v53M68 16v53" stroke="#2f5c4f" />
          <path d="M12 48h12l3-4l3 4h4l2-25l3 32l2-7h6l4-8l3 1l4 8l4-3l4 3h5" fill="none" stroke="#8ff0cf" stroke-width="2" />
        </svg>
      </a>
      <a href="#" class="app running" aria-label="AnyConnect">
        <svg viewBox="0 0 84 84">
          <use href="#globe" />
          <circle cx="20" cy="64" r="19" fill="#c98a3c" stroke="#fff" stroke-width="2" />
          <path d="M14 64v-5q0-6 6-6t6 6v5" fill="none" stroke="#fff" stroke-width="3" /><rect x="11" y="62" width="18" height="12" fill="#fff" />
        </svg>
      </a>
      <a href="#" class="app running" aria-label="Instruments">
        <svg viewBox="0 0 84 84">
          <g transform="rotate(-8 42 43)">
            <rect x="7" y="11" width="72" height="66" rx="2" fill="#7e8588" /><rect x="7" y="9" width="72" height="64" rx="2" fill="#dde9ee" /><rect x="12" y="14" width="62" height="54" fill="#05080c" />
            <path d="M46 22L26 62M42 20l24 42M18 48h50" stroke="#2d7bd0" stroke-width="6" fill="none" /><path d="M46 22L26 62M42 20l24 42M18 48h50" stroke="#123a66" stroke-width="3" fill="none" />
          </g>
        </svg>
      </a>
      <a href="#" class="app running" aria-label="Chrome">
        <svg viewBox="0 0 84 84">
          <rect x="8" y="8" width="69" height="70" rx="15" fill="#fdfdfd" />
          <circle cx="42" cy="43" r="28" fill="#fbc934" />
          <path d="M17 30a28 28 0 0 1 50 0H42l-12 8z" fill="#d9443a" />
          <path d="M17 30a28 28 0 0 0 24 41l13-22L30 49z" fill="#179e5a" />
          <circle cx="42" cy="43" r="13" fill="#fff" /><circle cx="42" cy="43" r="10" fill="#4a8af4" />
        </svg>
      </a>
      <span class="dock-sep"></span>
      <a href="#" class="app" aria-label="Downloads">
        <svg viewBox="0 0 84 84">
          <path d="M18 1h34l12 22v6H18z" fill="#f4f4f4" /><path d="M41 1v26" stroke="#444" stroke-width="6" stroke-dasharray="4 1" />
          <path d="M6 22q0-3 3-3h16q3 0 5 5h46q3 0 3 3v46q0 3-3 3H9q-3 0-3-3z" fill="url(#g-folder)" /><path d="M7 70h71M7 73h71" stroke="#4ea7d4" />
        </svg>
      </a>
      <a href="#" class="app" aria-label="Trash">
        <svg viewBox="0 0 84 84">
          <path d="M16 14l8-8l8 3l6-7l10 6l8-4l8 10l6 4l-28 8l-28-6z" fill="#f2f2f2" /><path d="M20 14l8-4l4 9zM36 5l7 7l-8 6zM50 8l9 5l-7 7zM62 13l6-1l-2 8z" fill="#555" /><path d="M32 14l8 1l-5 5z" fill="#2aa6c9" /><path d="M46 15l7 2l-6 3z" fill="#d2622a" />
          <path d="M10 14q32 14 64 0l-9 61q-3 6-23 6t-23-6z" fill="#e6e6e8" opacity="0.85" stroke="#c6c6c8" /><path d="M22 26l6 46M34 28l2 48M52 28l-3 48M63 26l-7 46" stroke="#f8f8f8" stroke-width="3" opacity="0.6" />
        </svg>
      </a>
    </nav>
  </body>
</html>
```
FILE: styles.css
```css
* {
  box-sizing: border-box;
}
body {
  margin: 0;
  height: 100vh;
  display: flex;
  flex-direction: column;
  overflow: hidden;
  background: #020d1c;
  color: #262626;
  font: 22px/26px Inter, "Liberation Sans", sans-serif;
}
a {
  color: inherit;
  text-decoration: none;
}
button {
  padding: 0;
  border: 0;
  background: none;
  color: inherit;
  font: inherit;
}
svg {
  display: block;
  flex: none;
}
.wallpaper {
  position: fixed;
  z-index: -1;
  width: 100%;
  height: 100%;
}

/* menu bar */
.menubar {
  display: flex;
  align-items: center;
  height: 44px;
  padding: 0 46px 0 42px;
  background: #fafafa;
  color: #000;
  font-size: 27px;
  white-space: nowrap;
}
.menus {
  display: flex;
  align-items: center;
  gap: 38px;
  margin-right: auto;
}
.apple {
  width: 26px;
  height: 32px;
  margin-right: 2px;
}
.app-name {
  font-size: 28px;
  font-weight: 700;
}
.status {
  display: flex;
  align-items: center;
  gap: 22px;
}
.status-c {
  margin-right: 8px;
}
.status-pair {
  display: flex;
  align-items: center;
  gap: 9px;
}
.input-source {
  font-size: 22px;
}
.charge {
  font-size: 24px;
}
.account {
  gap: 30px;
  margin-left: 34px;
}
.user {
  font-size: 28px;
  font-weight: 500;
}
.menubar-siri {
  margin-right: -6px;
}

/* window */
.window {
  display: flex;
  flex-direction: column;
  flex: 1;
  min-height: 0;
  margin: 2px 0 106px;
  border: solid #f4f4f4;
  border-width: 2px 2px 0;
  border-radius: 12px;
  overflow: hidden;
  background: #fff;
}
.chrome {
  border-bottom: 2px solid #7a7a7a;
  background: linear-gradient(#e6e6e6, #cdcdcd);
}
.titlebar {
  display: grid;
  grid-template-columns: 1fr auto 1fr;
  align-items: center;
  height: 42px;
  padding: 0 14px;
}
.titlebar h1 {
  margin: 0;
  color: #3d3d3d;
  font-size: 25px;
  font-weight: 400;
}
.lights {
  display: flex;
  gap: 16px;
}
.light {
  width: 24px;
  height: 24px;
  border: 1px solid #0003;
  border-radius: 50%;
}
.close {
  background: radial-gradient(circle, #fff 4px, #fc4040 5px);
}
.minimize {
  background: #f6b100;
}
.maximize {
  background: #08a11d;
}
.toolbar {
  display: grid;
  grid-template-columns: 1fr 524px 1fr;
  align-items: center;
  height: 64px;
  padding: 0 30px 6px;
}
.toolbar-left {
  display: flex;
  gap: 16px;
}
.toolbar-right {
  display: flex;
  justify-content: flex-end;
  gap: 12px;
  padding-right: 8px;
}
.tool,
.run,
.segmented {
  display: flex;
  align-items: center;
  justify-content: center;
  width: 76px;
  height: 44px;
  border: 2px solid #4d4d4d;
  border-radius: 8px;
  background: #fff;
  color: #000;
}
.target {
  gap: 9px;
  width: auto;
  padding: 0 12px 0 10px;
}
.run {
  gap: 20px;
  width: 100%;
  padding-top: 2px;
}
.segmented {
  width: 154px;
}
.segmented button {
  display: flex;
  flex: 1;
  align-items: center;
  justify-content: center;
  height: 100%;
}
.segmented button + button {
  border-left: 2px solid #4d4d4d;
}

/* filter bar */
.filterbar {
  display: flex;
  align-items: center;
  height: 56px;
  padding: 0 14px;
  border-bottom: 2px solid #7a7a7a;
  background: #f1f1f1;
}
.search {
  display: flex;
  align-items: center;
  height: 42px;
  padding-left: 6px;
  border: 2px solid #5a5a5a;
  border-radius: 8px;
  background: #fff;
}
.search input {
  flex: 1;
  min-width: 0;
  padding: 2px 0 0 22px;
  border: 0;
  outline: 0;
  background: none;
  font: inherit;
}
.search input::placeholder {
  color: #a6a6a6;
  opacity: 1;
}
.track-search {
  width: 800px;
  color: #777;
}
.scopes {
  display: flex;
  gap: 14px;
  margin-left: 16px;
}
.scope {
  height: 32px;
  padding: 2px 14px 0;
  border-radius: 8px;
  color: #3d3d3d;
  font-size: 24px;
}
.scope.active {
  background: #4c4c4c;
  color: #fff;
  font-size: 23px;
  font-weight: 500;
}
.duplicate {
  width: 132px;
  height: 36px;
  margin-left: auto;
  border: 2px solid #4d4d4d;
  border-radius: 8px;
  background: #fff;
}

/* timeline */
.timeline {
  position: relative;
  border-bottom: 2px solid #7a7a7a;
}
.ruler {
  height: 42px;
  padding-left: 598px;
  border-bottom: 2px solid #7a7a7a;
}
.ruler-scale {
  display: flex;
  height: 40px;
  overflow: hidden;
  background:
    repeating-linear-gradient(90deg, #7a7a7a 0 2px, #0000 2px 200px),
    repeating-linear-gradient(90deg, #7a7a7a 0 2px, #0000 2px 20px) bottom / 100% 10px no-repeat;
}
.ruler-scale span {
  flex: none;
  width: 200px;
  padding: 5px 4px;
  color: #444;
  font-size: 20px;
}
.track {
  display: flex;
  height: 102px;
}
.thermal {
  height: 62px;
  border-bottom: 2px solid #7a7a7a;
}
.track-info {
  display: grid;
  grid-template-columns: 78px 1fr auto;
  width: 600px;
  padding: 10px 12px 0;
  border-right: 2px solid #7a7a7a;
}
.track-icon {
  width: 32px;
  height: 32px;
  margin-left: 6px;
}
.track-name {
  display: flex;
  grid-column: 2;
  flex-direction: column;
  align-items: flex-start;
  gap: 8px;
  margin-left: 8px;
  padding-top: 4px;
}
.track-name b {
  font-size: 23px;
  font-weight: 600;
}
.pill {
  display: flex;
  align-items: center;
  justify-content: center;
  width: 124px;
  height: 32px;
  border: 2px solid #7d7d7d;
  border-radius: 6px;
  color: #808080;
  font-size: 19px;
}
.track-label {
  padding-top: 27px;
}
.truncated {
  margin-right: 6px;
  color: #005f93;
}
.thermal .track-info {
  padding-top: 0;
}
.thermal .track-name {
  padding-top: 8px;
}
.thermal .track-label {
  padding: 0;
  color: #005f93;
  line-height: 22px;
}
.lane {
  position: relative;
  display: flex;
  flex: 1;
  border-bottom: 2px solid #dcdcdc;
}
.thermal .lane {
  border-bottom: 0;
}
.state {
  height: 60px;
  padding-left: 3px;
  border-radius: 0 0 10px 10px;
  background: #44b649;
  color: #0b6b16;
  font-size: 20px;
  line-height: 22px;
}
.nominal {
  width: 341px;
}
.fair {
  width: 115px;
}
.heap {
  width: 458px;
  height: 100px;
  margin-left: -2px;
}
.selected .track-info {
  margin-top: -2px;
  padding-top: 12px;
  border-color: #dcdcdc;
  background: #dcdcdc;
  color: #000;
}
.selected .pill {
  border-color: #757575;
  color: #757575;
}
.leak {
  position: absolute;
  top: 35px;
}
.leak.first {
  left: 101px;
}
.leak.second {
  left: 349px;
}
.track-peek {
  height: 6px;
  margin-left: 598px;
  border-left: 2px solid #7a7a7a;
  background: linear-gradient(#69b6e9, #69b6e9) 406px 0 / 2px 6px no-repeat;
}
.playhead {
  position: absolute;
  top: 30px;
  bottom: 0;
  left: 601px;
  background: linear-gradient(#7a7a7a, #7a7a7a) center / 2px 100% no-repeat;
}

/* detail pane */
.breadcrumb {
  display: flex;
  align-items: center;
  gap: 6px;
  height: 58px;
  padding: 2px 0 0 6px;
  border-bottom: 2px solid #7a7a7a;
  background: #f1f1f1;
  font-size: 23px;
}
.crumb-sep {
  margin-left: 10px;
  color: #777;
}
.detail {
  flex: 1;
  min-height: 0;
  overflow: hidden;
}
table {
  width: 100%;
  border-collapse: separate;
  border-spacing: 0;
  table-layout: fixed;
}
.c-object {
  width: 416px;
}
.c-count {
  width: 96px;
}
.c-address {
  width: 283px;
}
.c-size {
  width: 166px;
}
.c-library {
  width: 246px;
}
th {
  height: 48px;
  padding: 0 4px 2px;
  border-bottom: 2px solid #7a7a7a;
  background: linear-gradient(#7a7a7a, #7a7a7a) right 6px / 2px 34px no-repeat #f6f6f6;
  font-weight: 400;
  text-align: left;
  white-space: nowrap;
}
th:first-child {
  padding-left: 2px;
}
th:last-child {
  background: #f6f6f6;
}
th:nth-child(2),
th:nth-child(4) {
  padding-right: 26px;
  text-align: right;
}
th.sorted {
  font-weight: 600;
}
.sorted svg {
  display: inline-block;
  margin-left: 2px;
  vertical-align: middle;
}
td {
  height: 32px;
  padding: 2px 6px 0;
  border-bottom: 2px solid #c9c9c9;
  line-height: 28px;
  white-space: nowrap;
}
td:first-child {
  padding-left: 32px;
}
td:nth-child(3) {
  padding-left: 2px;
}
td:nth-child(2),
td:nth-child(4) {
  padding-right: 9px;
  text-align: right;
}
tr.selected {
  background: #002bc0;
  color: #fff;
  font-weight: 500;
}
tr.selected td:nth-child(n + 5) {
  font-size: 21px;
}
.disclosure {
  width: 14px;
  height: 18px;
  margin: 0 3px 0 -17px;
  background: #6e6e6e;
  clip-path: polygon(0 0, 100% 50%, 0 100%);
  vertical-align: -1px;
}
.selected .disclosure {
  background: #b9c6f2;
}
.focus {
  height: 24px;
  margin-left: 24px;
  vertical-align: top;
}

/* bottom bar */
.bottombar {
  display: flex;
  align-items: center;
  height: 58px;
  border-top: 2px solid #bdbdbd;
  background: linear-gradient(#efefef, #e2e2e2);
}
.input-filter {
  display: flex;
  align-items: center;
  width: 170px;
  height: 100%;
  padding-left: 26px;
  border-right: 2px solid #bdbdbd;
}
.detail-search {
  width: 344px;
  height: 44px;
  margin: 0 32px 0 14px;
  color: #444;
}
.snapshots {
  width: 137px;
  height: 38px;
  border: 2px solid #0a3fd8;
  border-radius: 8px;
  background: #fafafa;
  color: #0a3fd8;
}

/* dock */
.dock {
  position: fixed;
  right: 72px;
  bottom: 0;
  left: 72px;
  display: flex;
  height: 109px;
  padding: 0 3px;
  border: solid #f0f0f0;
  border-width: 2px 2px 0;
  border-radius: 10px 10px 0 0;
  background: #c8c8c8;
  box-shadow: 0 0 0 2px #444;
}
.app {
  position: relative;
  display: flex;
  flex: 1;
  justify-content: center;
  padding-top: 7px;
}
.app svg {
  width: 84px;
  height: 84px;
}
.running::after {
  content: "";
  position: absolute;
  bottom: 4px;
  width: 8px;
  height: 8px;
  border-radius: 50%;
  background: #444;
}
.badge {
  position: absolute;
  top: 7px;
  left: 50%;
  width: 32px;
  height: 32px;
  margin-left: 11px;
  border-radius: 50%;
  background: #fc453a;
  color: #fff;
  font-size: 19px;
  line-height: 32px;
  text-align: center;
}
.dock-sep {
  width: 40px;
  margin: 13px 0 16px;
  background: linear-gradient(#8c8c8c, #8c8c8c) center / 2px 100% no-repeat;
}
.petals rect {
  mix-blend-mode: multiply;
}
.cal-month {
  fill: #fff;
  font-size: 14px;
  text-anchor: middle;
}
.cal-day {
  fill: #222;
  font-size: 36px;
  font-weight: 300;
  text-anchor: middle;
}
.map-text {
  fill: #444;
  font-size: 13px;
  text-anchor: middle;
}
.pages-text {
  fill: #fff;
  font-size: 9px;
}
.prompt {
  fill: #fff;
  font: bold 20px "Liberation Mono", monospace;
}
.teams-text {
  fill: #fff;
  font-size: 28px;
  font-weight: 700;
  text-anchor: middle;
}
```
